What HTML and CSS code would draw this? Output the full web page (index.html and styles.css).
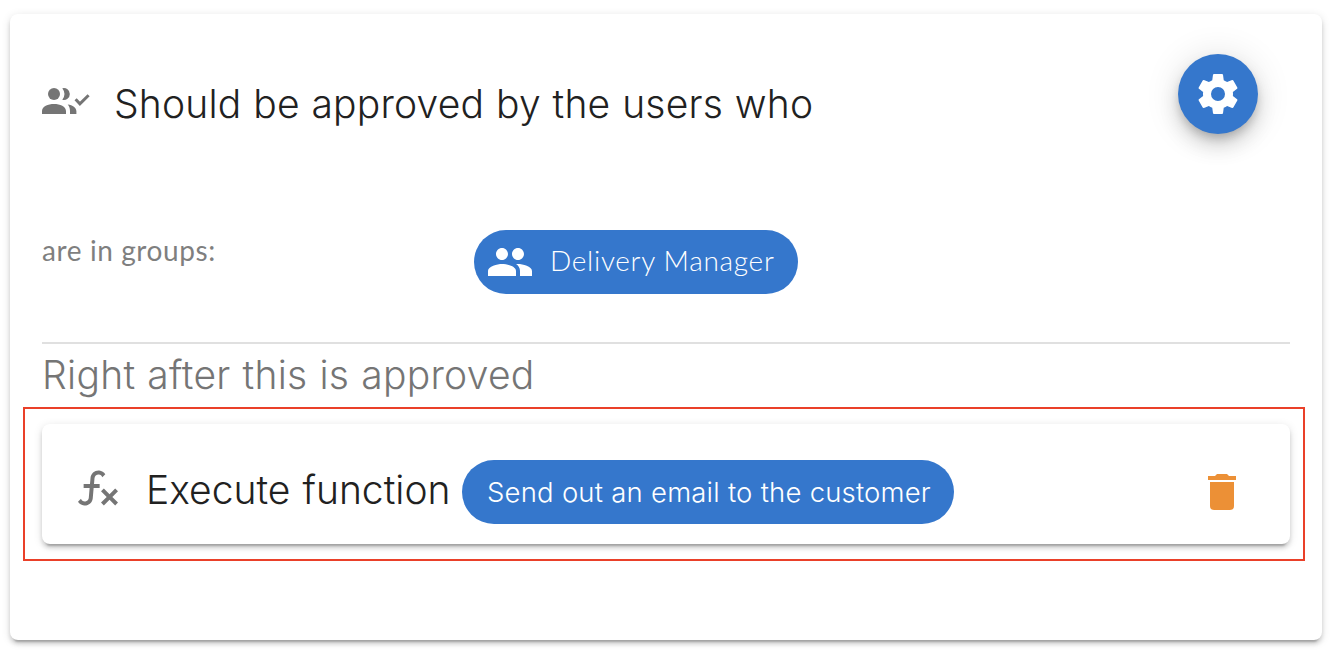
FILE: index.html
```html
<!DOCTYPE html>
<html lang="en">
<head>
<meta charset="utf-8">
<title>Approval step</title>
<link rel="stylesheet" href="styles.css">
</head>
<body>
<main class="card">
  <header class="card-header">
    <svg class="icon approvers-icon" viewBox="0 0 48 48"><circle cx="12" cy="16" r="6"/><path d="M0 36v-3c0-4.600 6-7 12-7s12 2.400 12 7v3zM20.300 10.200a6 6 0 1 1 0 11.600q4.400-5.800 0-11.600zM25.700 26.500c5 .8 8.700 3 8.700 6.800V36H28v-3c0-2.600-.9-4.900-2.300-6.500z"/><path class="check" d="M33.600 21.300l4.300 4.500 8.700-8.500"/></svg>
    <h1 class="title">Should be approved by the users who</h1>
    <button class="fab" aria-label="Settings"><svg class="icon" viewBox="0 0 24 24"><path d="M12 15.500A3.500 3.500 0 0 1 8.500 12 3.500 3.500 0 0 1 12 8.500a3.500 3.500 0 0 1 3.500 3.500 3.500 3.500 0 0 1-3.500 3.500m7.430-2.530c.04-.32.07-.64.07-.97s-.03-.66-.07-1l2.110-1.630c.19-.15.24-.42.12-.64l-2-3.460c-.12-.22-.39-.31-.61-.22l-2.490 1c-.52-.39-1.060-.73-1.690-.98l-.37-2.650A.506.506 0 0 0 14 2h-4c-.25 0-.46.18-.5.42l-.37 2.650c-.63.25-1.170.59-1.690.98l-2.490-1c-.22-.09-.49 0-.61.22l-2 3.460c-.13.22-.07.49.12.64L4.570 11c-.04.34-.07.67-.07 1s.03.65.07.97l-2.110 1.660c-.19.15-.25.42-.12.64l2 3.460c.12.22.39.3.61.22l2.490-1.010c.52.4 1.060.74 1.690.99l.37 2.650c.04.24.25.42.5.42h4c.25 0 .46-.18.5-.42l.37-2.650c.63-.26 1.170-.59 1.690-.99l2.490 1.010c.22.08.49 0 .61-.22l2-3.460c.12-.22.07-.49-.12-.64z"/></svg></button>
  </header>
  <section class="groups">
    <span class="groups-label">are in groups:</span>
    <span class="chip group-chip"><svg class="icon" viewBox="0 0 24 24"><path d="M16 11c1.660 0 2.990-1.340 2.990-3S17.660 5 16 5s-3 1.340-3 3 1.340 3 3 3m-8 0c1.660 0 2.990-1.340 2.990-3S9.660 5 8 5 5 6.340 5 8s1.340 3 3 3m0 2c-2.330 0-7 1.170-7 3.500V19h14v-2.500C15 14.170 10.330 13 8 13m8 0c-.29 0-.62.02-.97.05 1.160.84 1.970 1.970 1.970 3.450V19h6v-2.500c0-2.330-4.670-3.500-7-3.500"/></svg><span class="group-name">Delivery Manager</span></span>
  </section>
  <h2 class="subtitle">Right after this is approved</h2>
  <div class="highlight">
    <div class="action">
      <svg class="icon function-icon" viewBox="0 0 24 24"><path d="M12.420 5.290C11.320 5.190 10.350 6 10.250 7.110L10 10h2.820v2h-3l-.44 5.070C9.180 19.270 7.240 20.900 5.040 20.700 3.790 20.590 2.660 19.900 2 18.830l1.500-1.500c.33 1.050 1.460 1.640 2.500 1.300.78-.24 1.330-.93 1.400-1.740L7.820 12h-3v-2H8l.27-3.070C8.460 4.730 10.390 3.100 12.600 3.280c1.260.11 2.400.81 3.060 1.890l-1.500 1.500c-.25-.77-.93-1.310-1.740-1.380M22 13.650l-1.410-1.410-2.830 2.830-2.830-2.830-1.430 1.410 2.850 2.850-2.850 2.810 1.430 1.410 2.830-2.830 2.830 2.830L22 19.310l-2.830-2.810z"/></svg>
      <span class="action-name">Execute function</span>
      <span class="chip function-chip"><span class="function-name">Send out an email to the customer</span></span>
      <svg class="icon delete-icon" viewBox="0 0 24 24"><path d="M19 4h-3.500l-1-1h-5l-1 1H5v2h14M6 19a2 2 0 0 0 2 2h8a2 2 0 0 0 2-2V7H6z"/></svg>
    </div>
  </div>
</main>
</body>
</html>
```
FILE: styles.css
```css
* { box-sizing: border-box; }
body {
  margin: 0;
  padding: 14px 12px 16px 10px;
  background: #fff;
  color: #212121;
  font-family: Inter, "Liberation Sans", sans-serif;
  font-weight: 300;
}
h1, h2 { margin: 0; font-weight: inherit; }
.icon { width: 48px; height: 48px; flex: none; fill: currentColor; display: block; }
.card, .action {
  background: #fff;
  border-radius: 8px;
  box-shadow: 0 6px 2px -4px rgba(0,0,0,.2), 0 4px 4px rgba(0,0,0,.14), 0 2px 10px rgba(0,0,0,.12);
}
.card { height: 626px; padding: 40px 32px 0; }
.card-header { display: flex; align-items: flex-start; height: 176px; }
.approvers-icon { color: #757575; margin-top: 24px; }
.check { fill: none; stroke: currentColor; stroke-width: 3; }
.title, .subtitle, .action-name { font-size: 39px; line-height: 48px; white-space: nowrap; }
.title { margin: 26px 0 0 24px; letter-spacing: .2px; word-spacing: .6px; }
.fab {
  display: flex; align-items: center; justify-content: center;
  width: 80px; height: 80px; padding: 0;
  margin-left: auto; margin-right: 32px;
  border: 0; border-radius: 50%;
  background: #3577cc; color: #fff;
  box-shadow: 0 6px 10px -2px rgba(0,0,0,.2), 0 12px 20px rgba(0,0,0,.14), 0 2px 36px rgba(0,0,0,.12);
}
.groups {
  display: flex; align-items: flex-start;
  height: 114px;
  border-bottom: 2px solid #e0e0e0;
  font-family: Lato, sans-serif;
}
.groups-label { width: 432px; padding-top: 3px; font-size: 28px; line-height: 34px; font-weight: 400; color: #7f7f7f; letter-spacing: .6px; }
.chip { display: flex; align-items: center; flex: none; height: 64px; border-radius: 32px; background: #3577cc; color: #fff; white-space: nowrap; }
.group-chip { width: 324px; padding-left: 12px; }
.group-name { margin: -4px 0 0 16px; font-size: 28px; line-height: 34px; letter-spacing: .7px; }
.subtitle { margin-top: 7px; color: #757575; letter-spacing: .28px; word-spacing: .7px; }
.highlight { margin: 8px -15px 0 -19px; padding: 15px 13px 15px 17px; height: 154px; border: 2px solid #ea4029; }
.action { display: flex; height: 120px; padding: 36px 44px 0 32px; }
.function-icon { color: #757575; margin-top: 4px; }
.action-name { margin: 6px 0 0 24px; width: 316px; letter-spacing: .02px; word-spacing: 1px; }
.function-chip { width: 492px; padding-left: 25px; }
.function-name { font-size: 27.500px; letter-spacing: .16px; word-spacing: .3px; }
.delete-icon { margin: 8px 0 0 auto; color: #ec9036; }
```
